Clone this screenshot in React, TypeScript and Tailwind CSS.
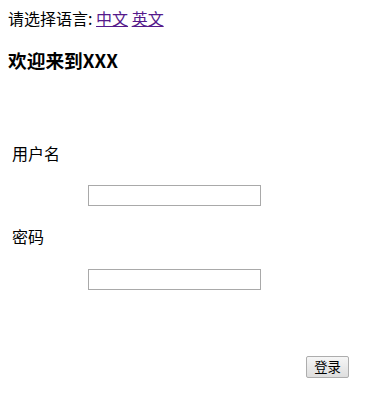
import React from "react";

export default function App() {
  const font = { fontFamily: '"Noto Sans CJK SC", "Liberation Sans", sans-serif' };
  return (
    <div className="bg-white w-[370px] h-[396px] pt-2 px-2 text-black" style={font}>
      <div className="text-[16px] leading-[21px]">
        请选择语言:{" "}
        <a href="#" className="text-[#551a8b] underline">中文</a>{" "}
        <a href="#" className="text-[#551a8b] underline">英文</a>
      </div>
      <h3 className="text-[18.72px] font-bold leading-[25px] mt-[18px]">欢迎来到XXX</h3>
      <form className="mt-[71px] pl-[4px] text-[16px] leading-[21px]" onSubmit={(e) => e.preventDefault()}>
        <div>用户名</div>
        <div className="pl-[76px] mt-[21px]">
          <input type="text" className="block w-[173px] h-[21px] border border-[#a9a9a9] bg-white outline-none" />
        </div>
        <div className="mt-[20px]">密码</div>
        <div className="pl-[76px] mt-[22px]">
          <input type="password" className="block w-[173px] h-[21px] border border-[#a9a9a9] bg-white outline-none" />
        </div>
        <div className="pl-[294px] mt-[66px]">
          <button type="submit" className="block w-[43px] h-[22px] border border-[#adadad] rounded-[2px] bg-gradient-to-b from-[#f6f6f6] to-[#dedede] text-[13.33px] leading-[18px]">
            登录
          </button>
        </div>
      </form>
    </div>
  );
}
